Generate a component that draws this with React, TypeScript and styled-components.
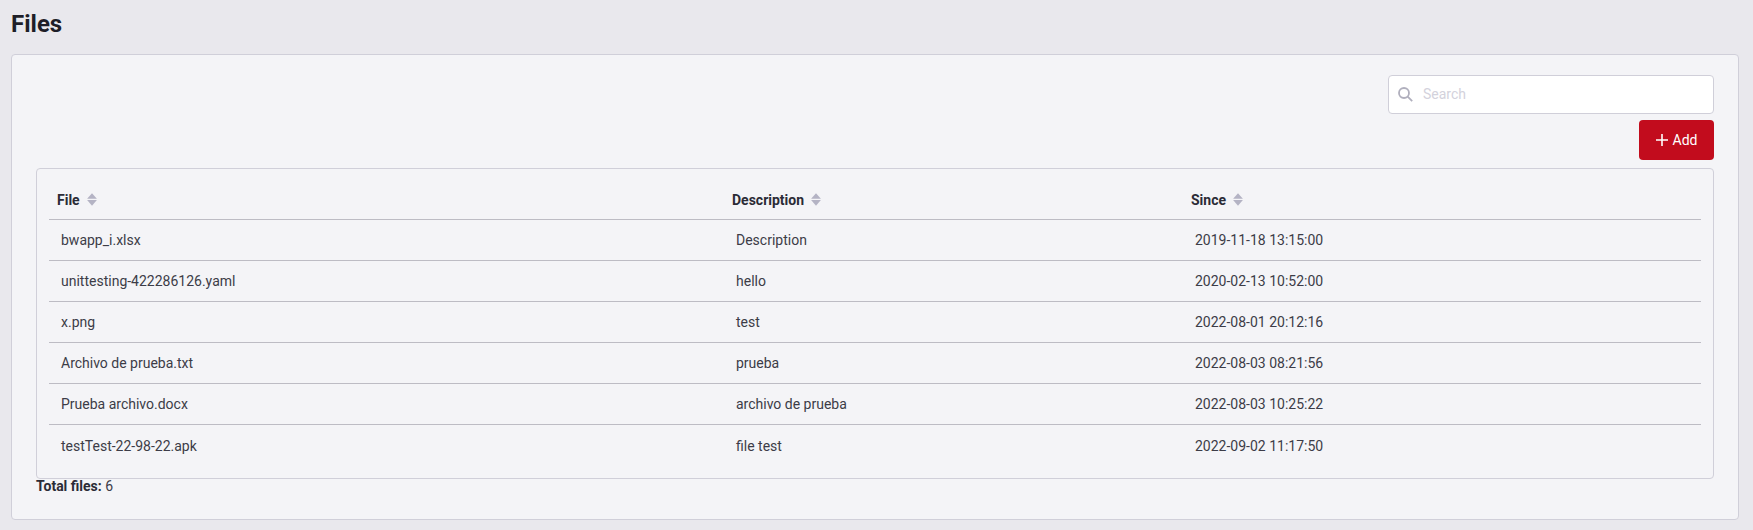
import React, { FC } from 'react';
import styled, { createGlobalStyle } from 'styled-components';

const GlobalStyle = createGlobalStyle`
html, body {
    margin: 0;
    padding: 0;
    background: #e9e8ed;
    font-family: Roboto, "Liberation Sans", sans-serif;
    color: #2b2b36;
}
`;

const Page = styled.div`
width: 1753px;
height: 530px;
box-sizing: border-box;
padding: 10px 14px 10px 11px;
display: flex;
flex-direction: column;
overflow: hidden;
`;

const Title = styled.h1`
margin: 0 0 15px 0;
font-size: 24px;
line-height: 29px;
font-weight: 700;
color: #1e1e28;
`;

const Panel = styled.div`
flex: 1;
box-sizing: border-box;
background: #f4f4f7;
border: 1px solid #d0cfd9;
border-radius: 4px;
padding: 20px 24px 0 24px;
display: flex;
flex-direction: column;
`;

const Toolbar = styled.div`
display: flex;
flex-direction: column;
align-items: flex-end;
gap: 6px;
margin-bottom: 8px;
`;

const SearchBox = styled.div`
width: 326px;
height: 39px;
box-sizing: border-box;
display: flex;
align-items: center;
gap: 10px;
padding-left: 9px;
background: #ffffff;
border: 1px solid #d0cfd9;
border-radius: 4px;
`;

const SearchInput = styled.input`
flex: 1;
border: none;
outline: none;
background: transparent;
padding: 0 0 2px 0;
font-family: inherit;
font-size: 14px;
&::placeholder {
    color: #d3d2dc;
    opacity: 1;
}
`;

const AddButton = styled.button`
width: 75px;
height: 40px;
display: flex;
align-items: center;
justify-content: center;
gap: 5px;
padding: 0;
border: none;
border-radius: 4px;
background: #c20c1d;
color: #ffffff;
font-family: inherit;
font-size: 14px;
`;

const TableCard = styled.div`
height: 311px;
box-sizing: border-box;
border: 1px solid #d0cfd9;
border-radius: 4px;
padding: 8px 12px 0 12px;
`;

const Table = styled.table`
width: 100%;
border-collapse: collapse;
table-layout: fixed;
font-size: 14px;
`;

const HeadCell = styled.th<{ $width?: number }>`
width: ${p => (p.$width ? `${p.$width}px` : 'auto')};
height: 42px;
box-sizing: border-box;
padding: 4px 0 0 8px;
text-align: left;
font-weight: 700;
color: #2b2b36;
border-bottom: 1px solid #bdbcc4;
`;

const HeadLabel = styled.span`
display: inline-flex;
align-items: center;
gap: 7px;
`;

const Row = styled.tr`
height: 41.2px;
border-bottom: 1px solid #bdbcc4;
&:last-child {
    border-bottom: none;
}
`;

const Cell = styled.td`
padding: 0 0 0 12px;
color: #3c3c47;
`;

const Total = styled.div`
font-size: 14px;
line-height: 14px;
color: #3c3c47;
`;

const TotalLabel = styled.b`
font-weight: 700;
color: #2b2b36;
`;

const SortIcon: FC = () => (
    <svg width="10" height="13" viewBox="0 0 10 13" fill="#b4b3c4">
        <path d="M5 0.2 L9.9 5.7 H0.1 Z" />
        <path d="M5 12.8 L9.9 7.1 H0.1 Z" />
    </svg>
);

const PlusIcon: FC = () => (
    <svg width="12" height="12" viewBox="0 0 12 12" stroke="#ffffff" strokeWidth="1.6">
        <path d="M6 0 V12 M0 6 H12" />
    </svg>
);

const SearchIcon: FC = () => (
    <svg width="15" height="15" viewBox="0 0 15 15" fill="none" stroke="#b0afbd" strokeWidth="1.8">
        <circle cx="6" cy="6" r="5" />
        <path d="M9.7 9.7 L14.2 14.2" />
    </svg>
);

const files = [
    { name: 'bwapp_i.xlsx', description: 'Description', since: '2019-11-18 13:15:00' },
    { name: 'unittesting-422286126.yaml', description: 'hello', since: '2020-02-13 10:52:00' },
    { name: 'x.png', description: 'test', since: '2022-08-01 20:12:16' },
    { name: 'Archivo de prueba.txt', description: 'prueba', since: '2022-08-03 08:21:56' },
    { name: 'Prueba archivo.docx', description: 'archivo de prueba', since: '2022-08-03 10:25:22' },
    { name: 'testTest-22-98-22.apk', description: 'file test', since: '2022-09-02 11:17:50' },
];

const App: FC = () => (
    <Page>
        <GlobalStyle />
        <Title>Files</Title>
        <Panel>
            <Toolbar>
                <SearchBox>
                    <SearchIcon />
                    <SearchInput placeholder="Search" />
                </SearchBox>
                <AddButton><PlusIcon /> Add</AddButton>
            </Toolbar>
            <TableCard>
                <Table>
                    <thead>
                        <tr>
                            <HeadCell $width={675}><HeadLabel>File <SortIcon /></HeadLabel></HeadCell>
                            <HeadCell $width={459}><HeadLabel>Description <SortIcon /></HeadLabel></HeadCell>
                            <HeadCell><HeadLabel>Since <SortIcon /></HeadLabel></HeadCell>
                        </tr>
                    </thead>
                    <tbody>
                        {files.map(f => (
                            <Row key={f.name}>
                                <Cell>{f.name}</Cell>
                                <Cell>{f.description}</Cell>
                                <Cell>{f.since}</Cell>
                            </Row>
                        ))}
                    </tbody>
                </Table>
            </TableCard>
            <Total><TotalLabel>Total files:</TotalLabel> 6</Total>
        </Panel>
    </Page>
);

export default App;
